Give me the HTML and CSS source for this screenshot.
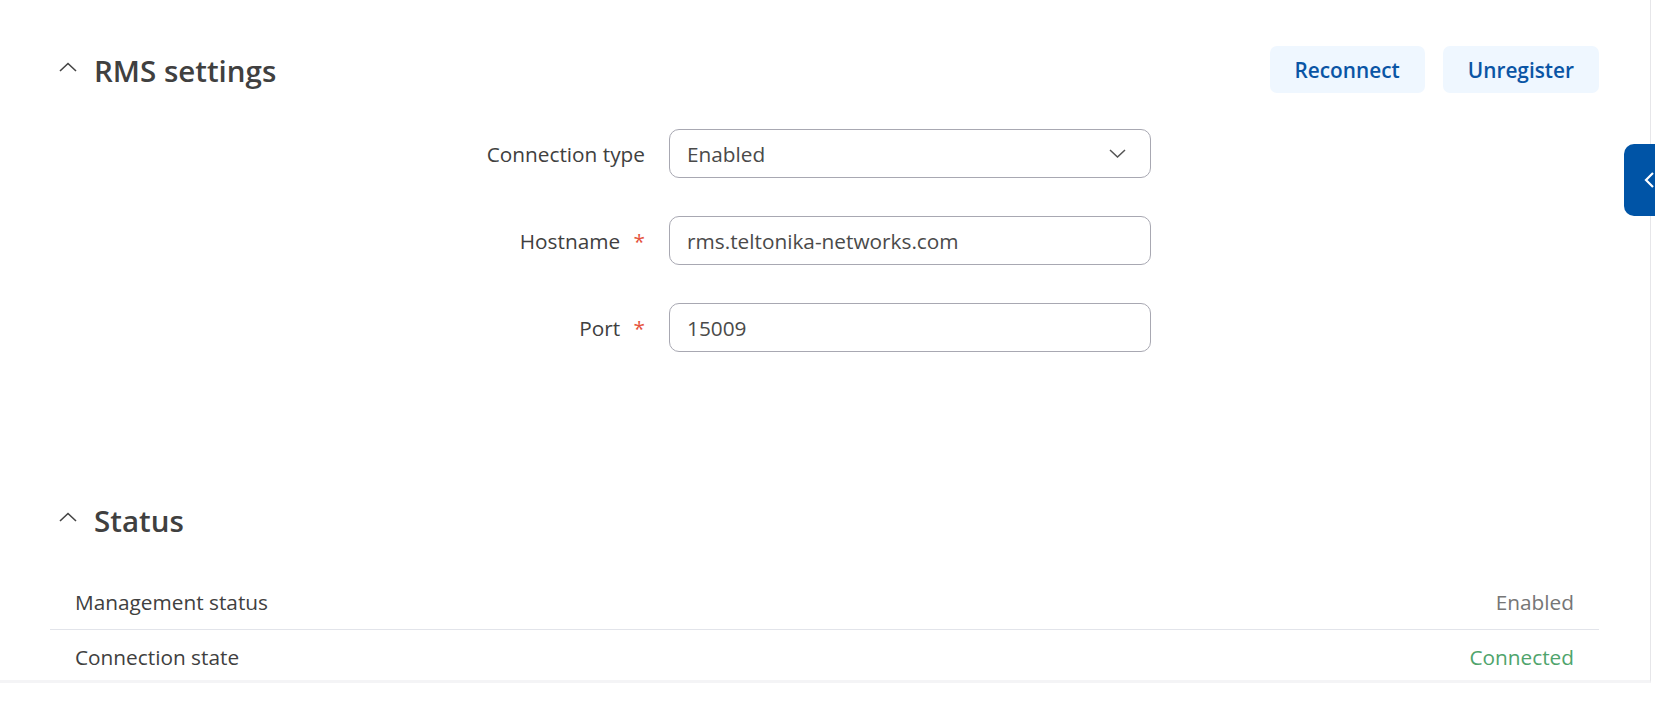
FILE: index.html
```html
<!doctype html>
<html lang="en">
<head>
    <meta charset="UTF-8">
    <title>RMS</title>
    <link rel="stylesheet" href="styles.css">
</head>
<body>
<div class="page">
    <div class="section">
        <div class="section-head">
            <h2 class="title">
                <svg class="toggle" width="18" height="10" viewBox="0 0 18 10"><path d="M1 9L9 1.5 17 9" fill="none" stroke="#444" stroke-width="1.6"/></svg>
                RMS settings
            </h2>
            <div class="actions">
                <button class="btn">Reconnect</button>
                <button class="btn">Unregister</button>
            </div>
        </div>

        <div class="form">
            <div class="field">
                <label>Connection type</label>
                <div class="input select">
                    <span>Enabled</span>
                    <svg width="17" height="9" viewBox="0 0 17 9"><path d="M1 1l7.5 7 7.5-7" fill="none" stroke="#555" stroke-width="1.5"/></svg>
                </div>
            </div>
            <div class="field">
                <label>Hostname <span class="req">*</span></label>
                <input class="input" type="text" value="rms.teltonika-networks.com">
            </div>
            <div class="field">
                <label>Port <span class="req">*</span></label>
                <input class="input" type="text" value="15009">
            </div>
        </div>
    </div>

    <div class="section status">
        <h2 class="title">
            <svg class="toggle" width="18" height="10" viewBox="0 0 18 10"><path d="M1 9L9 1.5 17 9" fill="none" stroke="#444" stroke-width="1.6"/></svg>
            Status
        </h2>
        <div class="rows">
            <div class="row">
                <span>Management status</span>
                <span class="muted">Enabled</span>
            </div>
            <div class="row">
                <span>Connection state</span>
                <span class="ok">Connected</span>
            </div>
        </div>
    </div>
</div>
<div class="side-tab">
    <svg width="10" height="16" viewBox="0 0 10 16"><path d="M9 1L2 8l7 7" fill="none" stroke="#fff" stroke-width="2.2"/></svg>
</div>
</body>
</html>
```

FILE: styles.css
```css
* {
    margin: 0;
    padding: 0;
    box-sizing: border-box;
}

body {
    background: #fff;
    font-family: "Open Sans", "Noto Sans", sans-serif;
    font-size: 20.8px;
    color: #404040;
    overflow: hidden;
}

.page {
    width: 1651px;
    height: 683px;
    background: #fff;
    border-right: 1px solid #e6e6e9;
    border-bottom: 3px solid #f4f4f6;
    padding: 0 51px 0 50px;
    overflow: hidden;
}

.section-head {
    display: flex;
    justify-content: space-between;
    align-items: center;
    padding-top: 46px;
}

.title {
    display: flex;
    align-items: center;
    font-size: 29.5px;
    font-weight: 600;
    color: #404040;
    line-height: 40px;
    padding-top: 3px;
}

.toggle {
    margin: 0 17px 0 9px;
    position: relative;
    top: -4px;
}

.actions {
    display: flex;
    gap: 18px;
}

.btn {
    height: 47px;
    padding: 0 25px;
    border: none;
    border-radius: 7px;
    background: #eff7ff;
    color: #0a55a5;
    font-family: inherit;
    font-size: 20.8px;
    font-weight: 600;
    min-width: 155px;
}

.form {
    margin-top: 36px;
    display: flex;
    flex-direction: column;
    gap: 38px;
}

.field {
    display: grid;
    grid-template-columns: 595px 482px;
    column-gap: 24px;
    align-items: center;
}

.field label {
    text-align: right;
    color: #404040;
}

.req {
    color: #e5533d;
    margin-left: 8px;
}

.input {
    height: 49px;
    border: 1px solid #a8a8b2;
    border-radius: 10px;
    padding: 0 17px;
    font-family: inherit;
    font-size: 20.8px;
    color: #4a4a4a;
    background: #fff;
    outline: none;
}

.select {
    display: flex;
    align-items: center;
    justify-content: space-between;
    padding-right: 24px;
}

.status {
    margin-top: 146px;
}

.rows {
    margin-top: 34px;
}

.row {
    display: flex;
    justify-content: space-between;
    align-items: center;
    height: 54px;
    padding: 0 25px;
}

.row + .row {
    border-top: 1px solid #e2e4ea;
}

.muted {
    color: #767676;
}

.ok {
    color: #4fa46c;
}

.side-tab {
    position: absolute;
    left: 1624px;
    top: 144px;
    width: 44px;
    height: 72px;
    background: #0054a6;
    border-radius: 10px 0 0 10px;
    display: flex;
    align-items: center;
    padding-left: 20px;
}
```
